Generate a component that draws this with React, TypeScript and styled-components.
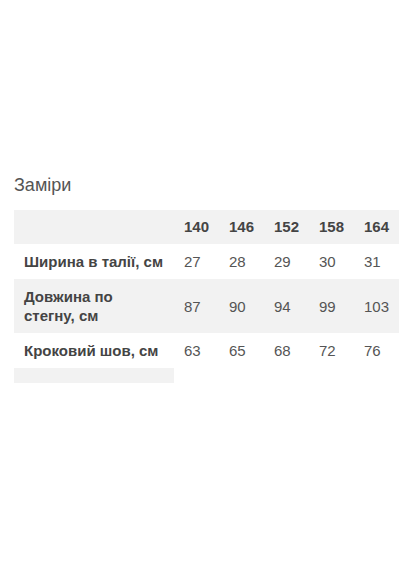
import React from 'react';
import styled, { createGlobalStyle } from 'styled-components';

const GlobalStyle = createGlobalStyle`
  body {
    margin: 0;
    background: #fff;
    font-family: "Liberation Sans", Arial, sans-serif;
  }
`;

const Page = styled.div`
  width: 414px;
  height: 576px;
  padding: 174px 15px 0 14px;
  box-sizing: border-box;
`;

const Title = styled.h3`
  margin: 0 0 13px;
  font-size: 18px;
  font-weight: 400;
  line-height: 23px;
  color: #555;
`;

const Table = styled.table`
  width: 385px;
  border-collapse: collapse;
  table-layout: fixed;
`;

const Row = styled.tr<{ $shaded?: boolean }>`
  background: ${({ $shaded }) => ($shaded ? '#f2f2f2' : 'transparent')};
`;

const LabelCell = styled.th`
  width: 140px;
  padding: 8px 10px;
  text-align: left;
  font-size: 15px;
  font-weight: 700;
  line-height: 19px;
  color: #444;
`;

const HeadCell = styled.th`
  width: 35px;
  padding: 8px 0 8px 10px;
  text-align: left;
  font-size: 15px;
  font-weight: 700;
  line-height: 18px;
  color: #444;
`;

const ValueCell = styled.td`
  padding: 8px 0 8px 10px;
  font-size: 15px;
  line-height: 19px;
  color: #555;
`;

const FooterBar = styled.div`
  width: 160px;
  height: 15px;
  background: #f2f2f2;
`;

const sizes = ['140', '146', '152', '158', '164'];

const rows = [
  { label: 'Ширина в талії, см', values: ['27', '28', '29', '30', '31'] },
  { label: 'Довжина по стегну, см', values: ['87', '90', '94', '99', '103'] },
  { label: 'Кроковий шов, см', values: ['63', '65', '68', '72', '76'] },
];

export default function App() {
  return (
    <>
      <GlobalStyle />
      <Page>
        <Title>Заміри</Title>
        <Table>
          <thead>
            <Row $shaded>
              <LabelCell />
              {sizes.map((s) => (
                <HeadCell key={s}>{s}</HeadCell>
              ))}
            </Row>
          </thead>
          <tbody>
            {rows.map((r, i) => (
              <Row key={r.label} $shaded={i % 2 === 1}>
                <LabelCell>{r.label}</LabelCell>
                {r.values.map((v, j) => (
                  <ValueCell key={j}>{v}</ValueCell>
                ))}
              </Row>
            ))}
          </tbody>
        </Table>
        <FooterBar />
      </Page>
    </>
  );
}
